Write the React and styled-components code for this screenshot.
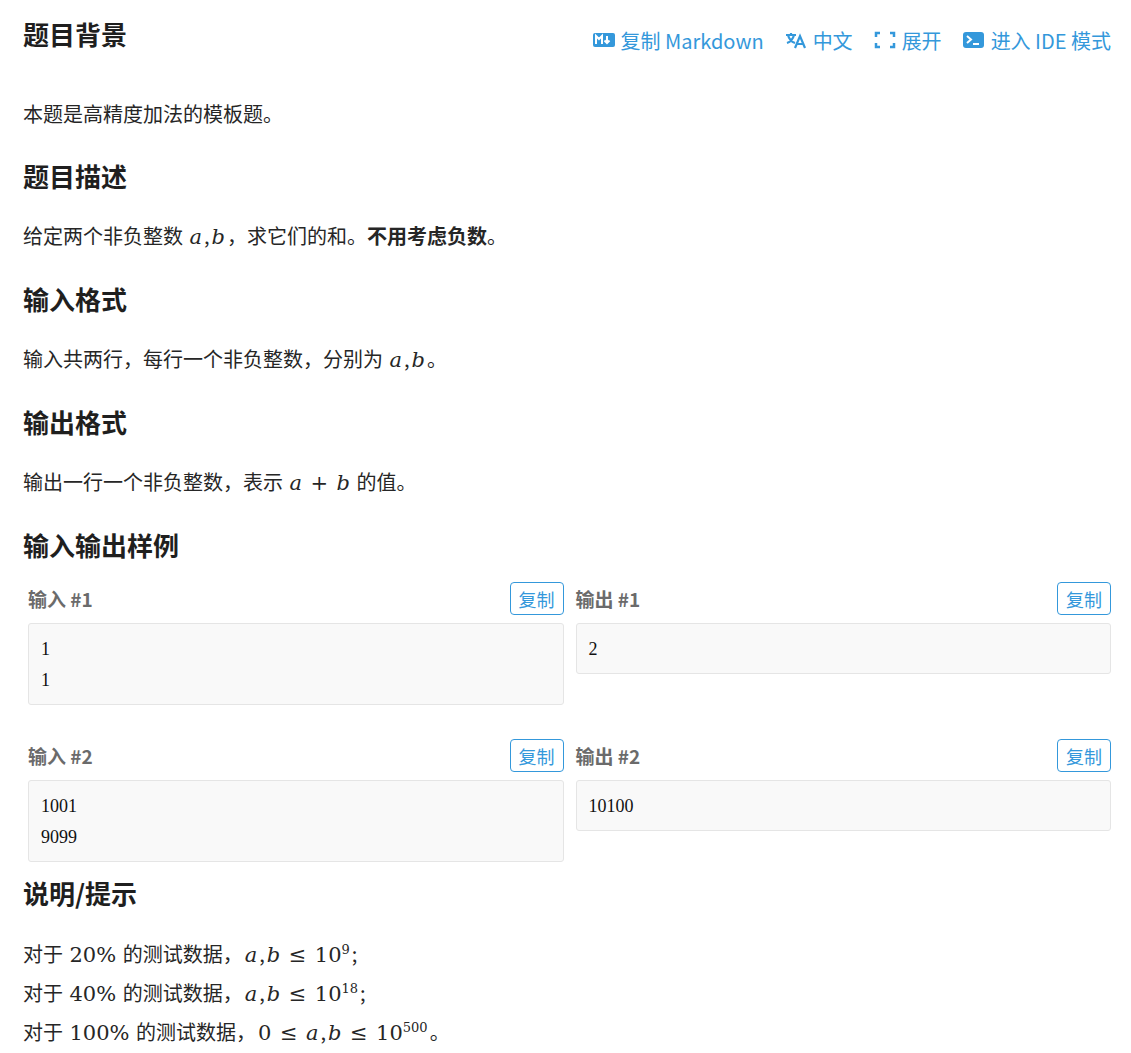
import React from "react";
import styled, { createGlobalStyle } from "styled-components";

const G = createGlobalStyle`
  body { margin: 0; background: #fff; font-family: "Noto Sans CJK SC", "Noto Sans", sans-serif; color: #262626; }
`;
const Page = styled.div`padding: 12px 20px 20px 23px; width: 1088px;`;
const Head = styled.div`display:flex; justify-content:space-between; align-items:center;`;
const H = styled.h2`font-size: 26px; font-weight: 700; margin: ${p => p.first ? "0" : (p.mt ?? 22) + "px"} 0 20px; line-height: 44px; color:#1f1f1f;`;
const P = styled.p`font-size: 20px; margin: 0; line-height: ${p => p.lh || 36}px;`;
const Tools = styled.div`display:flex; gap: 20px; margin-top: -8px;`;
const Tool = styled.span`display:flex; align-items:center; gap:5px; color:#3498db; font-size:20px;`;
const M = styled.span`font-family:"DejaVu Serif","Liberation Serif",serif; font-style:${p => p.up ? "normal" : "italic"}; font-size:21px; margin: 0 2px;`;
const Sup = styled.sup`font-family:"DejaVu Serif",serif; font-size: 13px; line-height: 0;`;
const Grid = styled.div`display:grid; grid-template-columns: 1fr 1fr; column-gap: 12px; row-gap: 34px; margin-top: -5px; padding-left: 5px;`;
const Cell = styled.div`display:flex; flex-direction:column;`;
const CellHead = styled.div`display:flex; justify-content:space-between; align-items:center; margin-bottom:8px;`;
const Label = styled.span`font-weight:700; color:#6b6b6b; font-size:19px;`;
const Btn = styled.button`border:1px solid #3498db; border-radius:4px; background:#fff; color:#3498db; font-size:18px; padding:0 8px; height:33px; font-family:inherit;`;
const Box = styled.pre`margin:0; background:#f9f9f9; border:1px solid #e5e5e5; border-radius:3px; padding:10px 12px 8px; font-family:"Liberation Serif","DejaVu Serif",serif; font-size:18px; line-height:31px; color:#111;`;

const Icon = ({ children }) => <svg width="24" height="20" viewBox="0 0 24 20">{children}</svg>;

const samples = [
  ["输入 #1", "1\n1"], ["输出 #1", "2"],
  ["输入 #2", "1001\n9099"], ["输出 #2", "10100"],
];

export default function App() {
  return (
    <Page>
      <G />
      <Head>
        <H first>题目背景</H>
        <Tools>
          <Tool><Icon><rect x="1" y="3" width="22" height="14" rx="2" fill="#3498db"/><path d="M4 14V6l3 3 3-3v8M15 6v7M12.5 10.5l2.5 2.5 2.5-2.5" stroke="#fff" strokeWidth="2" fill="none"/></Icon>复制 Markdown</Tool>
          <Tool><Icon><path d="M2 5h10M7 3v2M4 5c1 4 4 7 7 8M10 5c-1 4-4 7-7 8M11 18l5-12 5 12M13 14h6" stroke="#3498db" strokeWidth="2.2" fill="none"/></Icon>中文</Tool>
          <Tool><Icon><path d="M3 7V3h4M17 3h4v4M21 13v4h-4M7 17H3v-4" stroke="#3498db" strokeWidth="2.5" fill="none"/></Icon>展开</Tool>
          <Tool><Icon><rect x="1" y="2" width="21" height="16" rx="3" fill="#3498db"/><path d="M5 6l4 3.5L5 13M11 14h6" stroke="#fff" strokeWidth="2" fill="none"/></Icon>进入 IDE 模式</Tool>
        </Tools>
      </Head>
      <P style={{ marginTop: 20 }}>本题是高精度加法的模板题。</P>
      <H>题目描述</H>
      <P>给定两个非负整数 <M>a</M>,<M>b</M>，求它们的和。<b>不用考虑负数</b>。</P>
      <H>输入格式</H>
      <P>输入共两行，每行一个非负整数，分别为 <M>a</M>,<M>b</M>。</P>
      <H>输出格式</H>
      <P>输出一行一个非负整数，表示 <M>a</M> <M up>+</M> <M>b</M> 的值。</P>
      <H>输入输出样例</H>
      <Grid>
        {samples.map(([l, v]) => (
          <Cell key={l}>
            <CellHead><Label>{l}</Label><Btn>复制</Btn></CellHead>
            <Box>{v}</Box>
          </Cell>
        ))}
      </Grid>
      <H mt={9}>说明/提示</H>
      <P lh={38}>对于 <M up>20%</M> 的测试数据，<M>a</M>,<M>b</M> <M up>≤</M> <M up>10<Sup>9</Sup></M>;</P>
      <P lh={38}>对于 <M up>40%</M> 的测试数据，<M>a</M>,<M>b</M> <M up>≤</M> <M up>10<Sup>18</Sup></M>;</P>
      <P lh={38}>对于 <M up>100%</M> 的测试数据，<M up>0</M> <M up>≤</M> <M>a</M>,<M>b</M> <M up>≤</M> <M up>10<Sup>500</Sup></M>。</P>
    </Page>
  );
}
